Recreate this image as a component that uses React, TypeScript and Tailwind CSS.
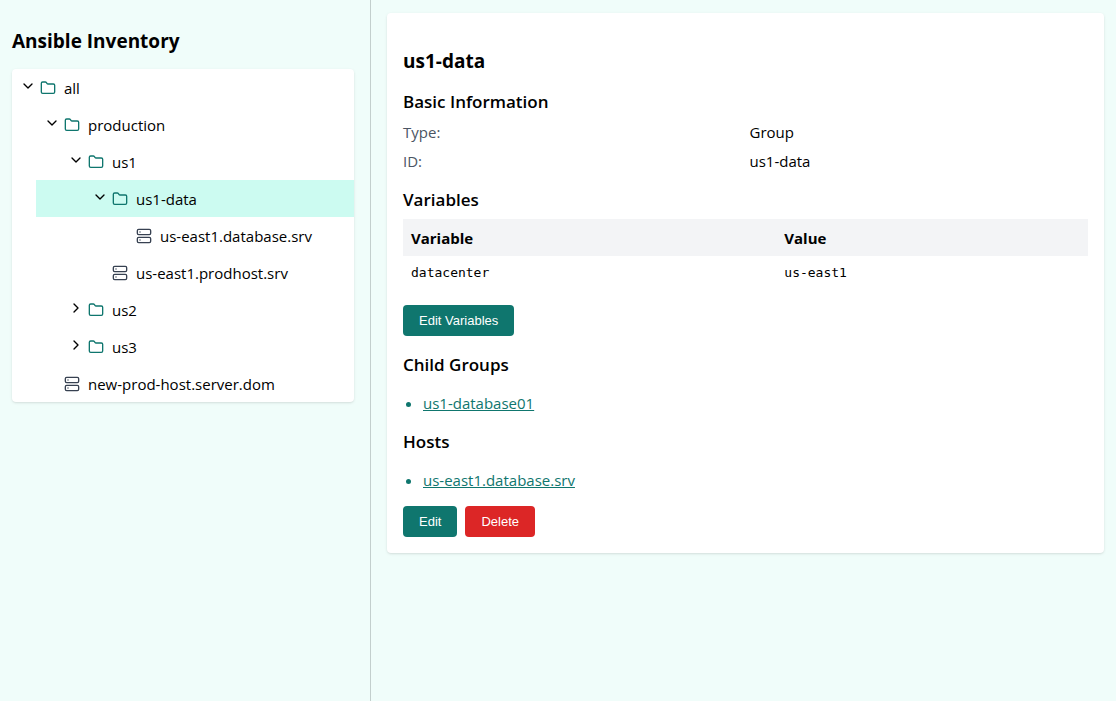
import { useState } from "react";
import { ChevronDown, ChevronRight, Folder, Server } from "lucide-react";

type TreeNode = {
  name: string;
  kind: "group" | "host";
  open?: boolean;
  children?: TreeNode[];
};

const inventory: TreeNode = {
  name: "all",
  kind: "group",
  open: true,
  children: [
    {
      name: "production",
      kind: "group",
      open: true,
      children: [
        {
          name: "us1",
          kind: "group",
          open: true,
          children: [
            {
              name: "us1-data",
              kind: "group",
              open: true,
              children: [{ name: "us-east1.database.srv", kind: "host" }],
            },
            { name: "us-east1.prodhost.srv", kind: "host" },
          ],
        },
        { name: "us2", kind: "group" },
        { name: "us3", kind: "group" },
      ],
    },
    { name: "new-prod-host.server.dom", kind: "host" },
  ],
};

const depthPadding = ["pl-2", "pl-2", "pl-8", "pl-14", "pl-20"];

function TreeItem({
  node,
  depth,
  selected,
  onSelect,
}: {
  node: TreeNode;
  depth: number;
  selected: string;
  onSelect: (name: string) => void;
}) {
  const [open, setOpen] = useState(Boolean(node.open));
  const isGroup = node.kind === "group";
  const Chevron = open ? ChevronDown : ChevronRight;

  return (
    <li>
      <div
        className={`flex items-center py-2 pr-2 ${depthPadding[depth]} ${
          node.name === selected ? "bg-[#ccfbf1]" : ""
        }`}
      >
        {isGroup ? (
          <button
            type="button"
            aria-label={`Toggle ${node.name}`}
            aria-expanded={open}
            onClick={() => setOpen(!open)}
            className="mr-1 pb-[3px]"
          >
            <Chevron size={16} />
          </button>
        ) : (
          <span className="w-5" />
        )}
        <button
          type="button"
          onClick={() => onSelect(node.name)}
          className="flex items-center gap-2"
        >
          {isGroup ? (
            <Folder size={16} className="text-[#0f766e]" />
          ) : (
            <Server size={16} className="text-[#374151]" />
          )}
          <span className="pt-0.5 leading-[19px]">{node.name}</span>
        </button>
      </div>
      {open && node.children && (
        <ul className={depth === 0 ? "ml-6" : ""}>
          {node.children.map((child) => (
            <TreeItem
              key={child.name}
              node={child}
              depth={depth + 1}
              selected={selected}
              onSelect={onSelect}
            />
          ))}
        </ul>
      )}
    </li>
  );
}

function SectionTitle({ children }: { children: string }) {
  return <h3 className="text-[17px] leading-6 font-semibold">{children}</h3>;
}

function LinkList({ items }: { items: string[] }) {
  return (
    <ul className="mt-4 list-disc pl-5 leading-[21px] text-[#0f766e]">
      {items.map((item) => (
        <li key={item}>
          <a href="#" className="underline">
            {item}
          </a>
        </li>
      ))}
    </ul>
  );
}

const buttonBase =
  "rounded-[4px] px-4 py-2 font-['Liberation_Sans',sans-serif] text-[13px] leading-[15px] font-medium text-white";

export default function App() {
  const [selected, setSelected] = useState("us1-data");

  return (
    <div className="grid min-h-screen grid-cols-[359fr_733fr] bg-[#f0fdfa] px-3 font-['Open_Sans','Noto_Sans',sans-serif] text-[15px] text-black">
      <aside className="border-r border-[#c3cfcd] pt-7 pr-4">
        <h1 className="mb-[14px] text-[19px] leading-[27px] font-bold">
          Ansible Inventory
        </h1>
        <ul className="overflow-hidden rounded-[4px] bg-white shadow-sm">
          <TreeItem
            node={inventory}
            depth={0}
            selected={selected}
            onSelect={setSelected}
          />
        </ul>
      </aside>

      <main className="pt-[13px] pl-4">
        <section className="rounded-[4px] bg-white p-4 shadow-sm">
          <h2 className="mt-[19px] mb-[15px] text-[19px] leading-[27px] font-bold">
            us1-data
          </h2>

          <SectionTitle>Basic Information</SectionTitle>
          <dl className="mt-2 mb-4 grid grid-cols-2 gap-2 leading-[21px]">
            <dt className="text-[#4b5563]">Type:</dt>
            <dd>Group</dd>
            <dt className="text-[#4b5563]">ID:</dt>
            <dd>us1-data</dd>
          </dl>

          <SectionTitle>Variables</SectionTitle>
          <table className="mt-[7px] mb-4 w-full text-left">
            <thead>
              <tr className="bg-[#f3f4f6] leading-[21px]">
                <th className="w-[54.5%] px-2 pt-[9px] pb-[7px] font-bold">Variable</th>
                <th className="px-2 pt-[9px] pb-[7px] font-bold">Value</th>
              </tr>
            </thead>
            <tbody>
              <tr className="font-['DejaVu_Sans_Mono',monospace] text-[13px] leading-[17px]">
                <td className="p-2">datacenter</td>
                <td className="p-2">us-east1</td>
              </tr>
            </tbody>
          </table>
          <button type="button" className={`${buttonBase} block bg-[#0f766e]`}>
            Edit Variables
          </button>

          <div className="mt-[17px] mb-[15px] flex flex-col gap-4">
            <div>
              <SectionTitle>Child Groups</SectionTitle>
              <LinkList items={["us1-database01"]} />
            </div>
            <div>
              <SectionTitle>Hosts</SectionTitle>
              <LinkList items={["us-east1.database.srv"]} />
            </div>
          </div>

          <div className="flex gap-2">
            <button type="button" className={`${buttonBase} bg-[#0f766e]`}>
              Edit
            </button>
            <button type="button" className={`${buttonBase} bg-[#dc2626]`}>
              Delete
            </button>
          </div>
        </section>
      </main>
    </div>
  );
}
